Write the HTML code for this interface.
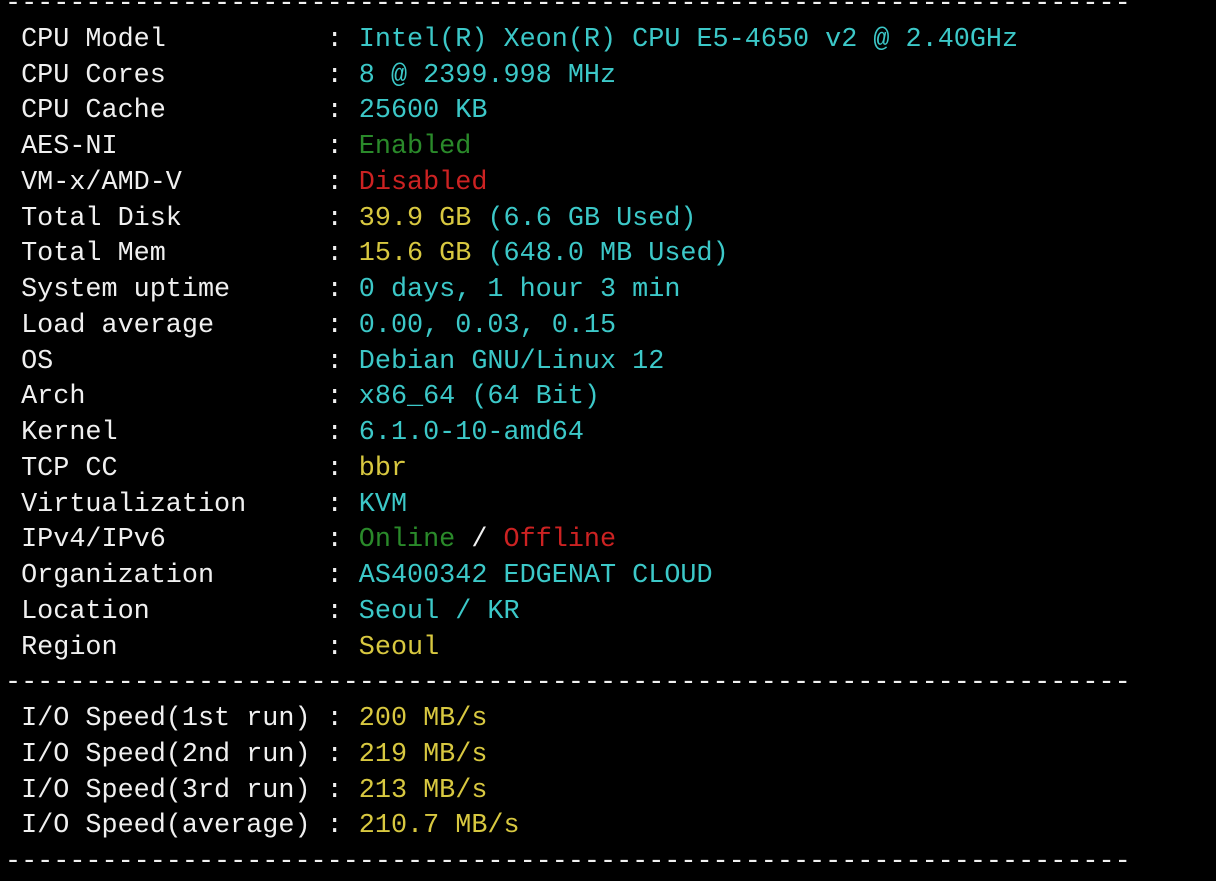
<!DOCTYPE html>
<html><head><meta charset="utf-8"><style>
html,body{margin:0;padding:0;background:#000;width:1216px;height:864px;overflow:hidden}
pre{position:absolute;left:5px;top:-13px;margin:0;font-family:"Liberation Mono",monospace;font-size:26.8px;line-height:35.75px;color:#f0f0f0;white-space:pre}
.c{color:#3cc8c8}.g{color:#2a8a2a}.r{color:#cc2222}.y{color:#d8c840}
</style></head><body><pre>----------------------------------------------------------------------
 CPU Model          : <span class="c">Intel(R) Xeon(R) CPU E5-4650 v2 @ 2.40GHz</span>
 CPU Cores          : <span class="c">8 @ 2399.998 MHz</span>
 CPU Cache          : <span class="c">25600 KB</span>
 AES-NI             : <span class="g">Enabled</span>
 VM-x/AMD-V         : <span class="r">Disabled</span>
 Total Disk         : <span class="y">39.9 GB</span> <span class="c">(6.6 GB Used)</span>
 Total Mem          : <span class="y">15.6 GB</span> <span class="c">(648.0 MB Used)</span>
 System uptime      : <span class="c">0 days, 1 hour 3 min</span>
 Load average       : <span class="c">0.00, 0.03, 0.15</span>
 OS                 : <span class="c">Debian GNU/Linux 12</span>
 Arch               : <span class="c">x86_64 (64 Bit)</span>
 Kernel             : <span class="c">6.1.0-10-amd64</span>
 TCP CC             : <span class="y">bbr</span>
 Virtualization     : <span class="c">KVM</span>
 IPv4/IPv6          : <span class="g">Online</span> / <span class="r">Offline</span>
 Organization       : <span class="c">AS400342 EDGENAT CLOUD</span>
 Location           : <span class="c">Seoul / KR</span>
 Region             : <span class="y">Seoul</span>
----------------------------------------------------------------------
 I/O Speed(1st run) : <span class="y">200 MB/s</span>
 I/O Speed(2nd run) : <span class="y">219 MB/s</span>
 I/O Speed(3rd run) : <span class="y">213 MB/s</span>
 I/O Speed(average) : <span class="y">210.7 MB/s</span>
----------------------------------------------------------------------</pre></body></html>
